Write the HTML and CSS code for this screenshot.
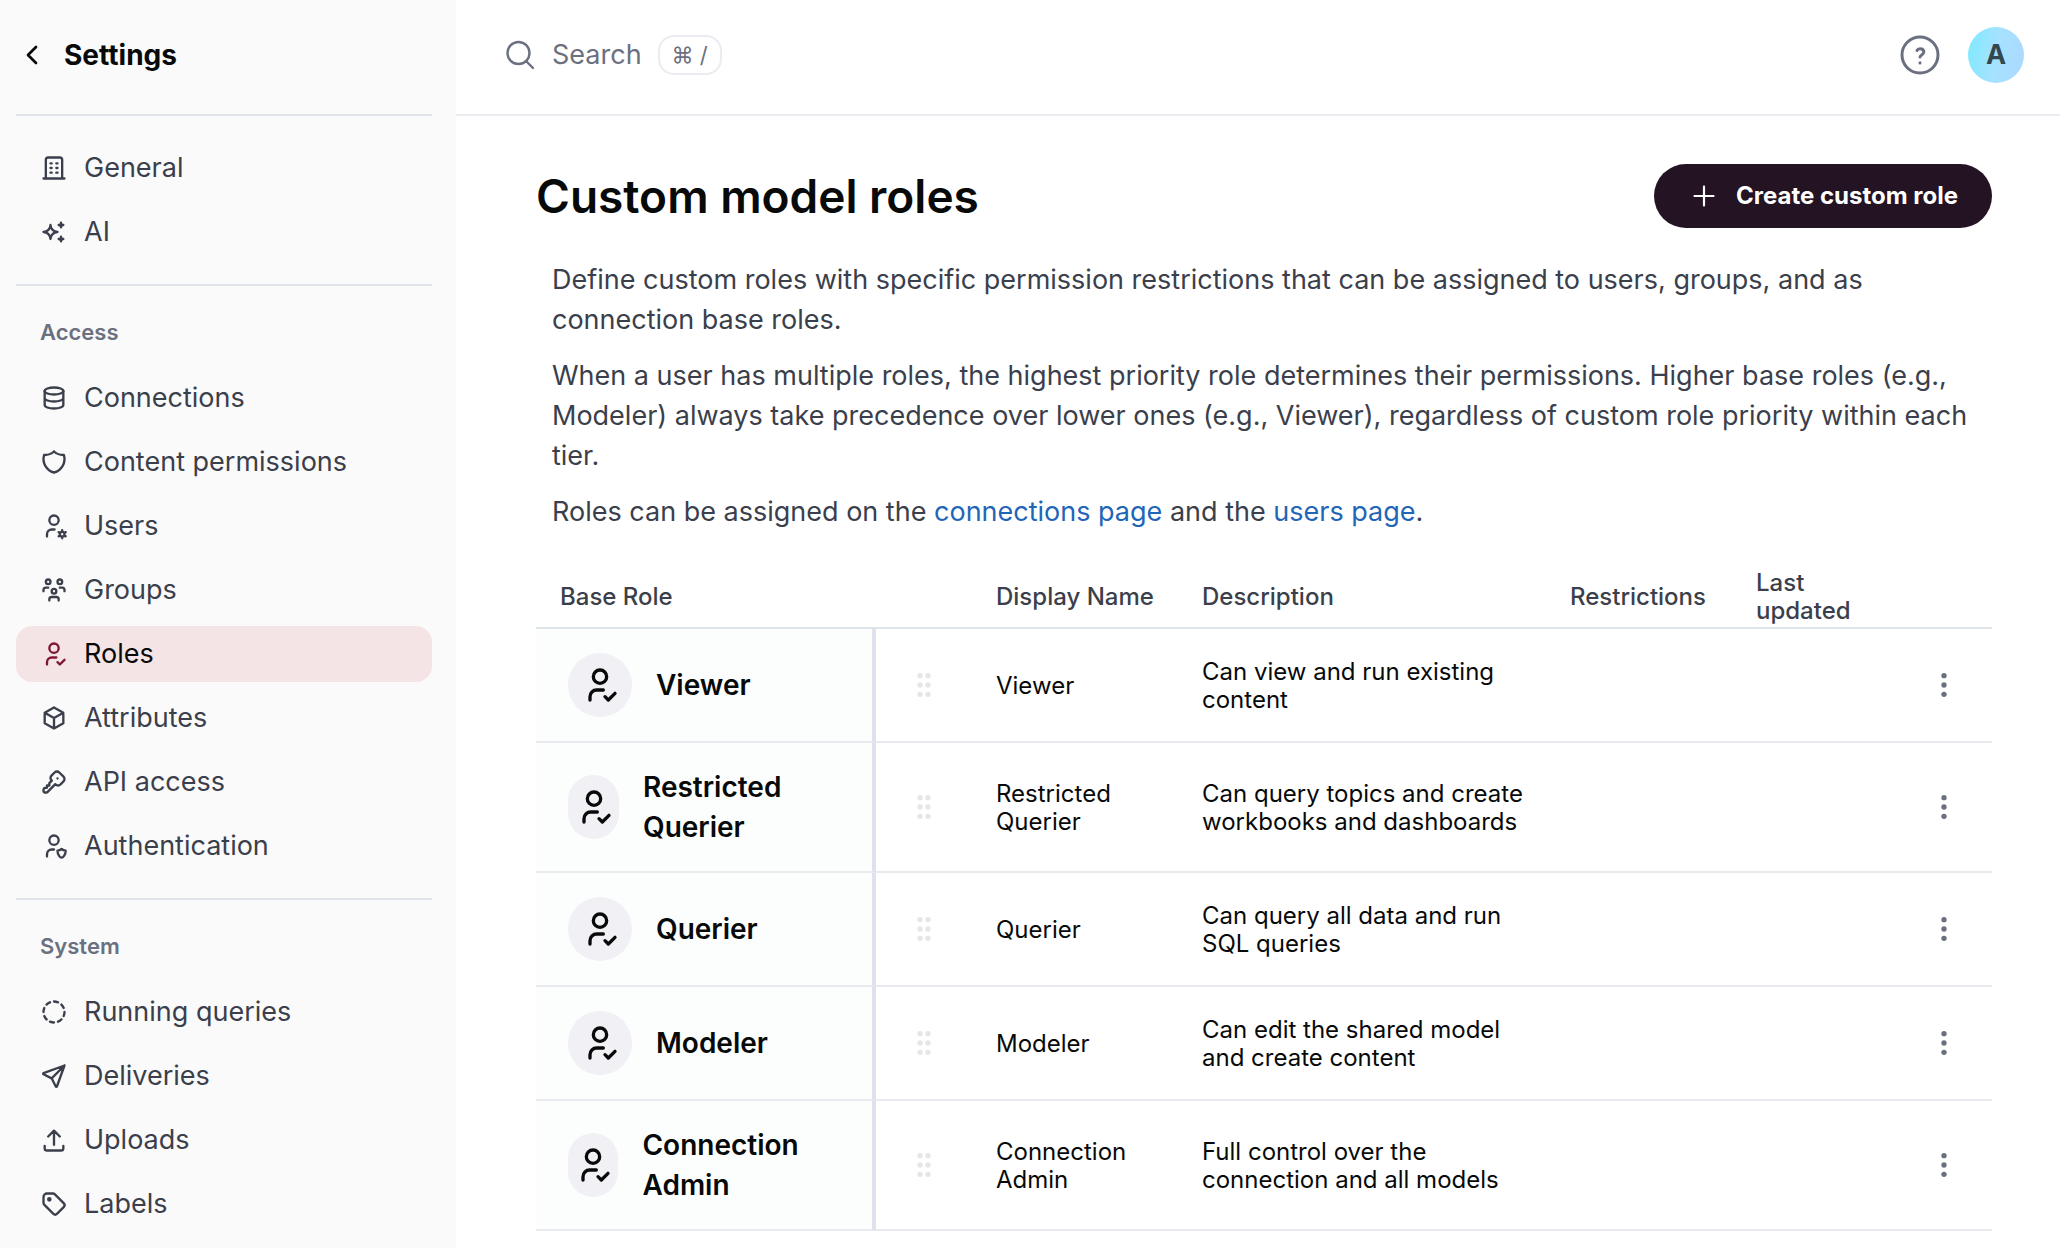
FILE: index.html
```html
<!DOCTYPE html>
<html lang="en">
<head>
<meta charset="utf-8">
<title>Custom model roles</title>
<link rel="stylesheet" href="styles.css">
</head>
<body>
<svg class="sprite" aria-hidden="true">
  <symbol id="user-check" viewBox="0 0 24 24"><path d="M8 7a4 4 0 1 0 8 0a4 4 0 0 0-8 0M6 21v-2a4 4 0 0 1 4-4h4M15 19l2 2l4-4"/></symbol>
  <symbol id="grip" viewBox="0 0 24 24"><g fill="currentColor" stroke="none"><circle cx="9" cy="5" r="2"/><circle cx="15" cy="5" r="2"/><circle cx="9" cy="12" r="2"/><circle cx="15" cy="12" r="2"/><circle cx="9" cy="19" r="2"/><circle cx="15" cy="19" r="2"/></g></symbol>
  <symbol id="dots" viewBox="0 0 24 24"><g fill="currentColor" stroke="none"><circle cx="12" cy="5" r="2"/><circle cx="12" cy="12" r="2"/><circle cx="12" cy="19" r="2"/></g></symbol>
</svg>
<div class="app">
  <aside class="sidebar">
    <a class="back" href="#">
      <svg class="icon icon-lg" viewBox="0 0 24 24"><path d="M15 6l-6 6l6 6"/></svg>
      <span>Settings</span>
    </a>
    <nav class="nav">
      <div class="nav-group">
        <a class="nav-item" href="#"><svg class="icon" viewBox="0 0 24 24"><path d="M3 21h18M5 21V5a2 2 0 0 1 2-2h10a2 2 0 0 1 2 2v16M9 8h1M9 12h1M9 16h1M14 8h1M14 12h1M14 16h1"/></svg>General</a>
        <a class="nav-item" href="#"><svg class="icon" viewBox="0 0 24 24"><path d="M16 18a2 2 0 0 1 2 2a2 2 0 0 1 2-2a2 2 0 0 1-2-2a2 2 0 0 1-2 2zm0-12a2 2 0 0 1 2 2a2 2 0 0 1 2-2a2 2 0 0 1-2-2a2 2 0 0 1-2 2zm-7 12a6 6 0 0 1 6-6a6 6 0 0 1-6-6a6 6 0 0 1-6 6a6 6 0 0 1 6 6z"/></svg>AI</a>
      </div>
      <div class="nav-group">
        <h2 class="nav-label">Access</h2>
        <a class="nav-item" href="#"><svg class="icon" viewBox="0 0 24 24"><ellipse cx="12" cy="6" rx="8" ry="3"/><path d="M4 6v6a8 3 0 0 0 16 0V6M4 12v6a8 3 0 0 0 16 0v-6"/></svg>Connections</a>
        <a class="nav-item" href="#"><svg class="icon" viewBox="0 0 24 24"><path d="M12 3a12 12 0 0 0 8.5 3a12 12 0 0 1-8.5 15a12 12 0 0 1-8.5-15a12 12 0 0 0 8.5-3"/></svg>Content permissions</a>
        <a class="nav-item" href="#"><svg class="icon" viewBox="0 0 24 24"><path d="M8 7a4 4 0 1 0 8 0a4 4 0 0 0-8 0M6 21v-2a4 4 0 0 1 4-4h2.500M17 19a2 2 0 1 0 4 0a2 2 0 1 0-4 0M19 15.500v1.500M19 21v1.500M22.032 17.250l-1.299.75M17.270 20l-1.300.75M15.970 17.250l1.300.75M20.733 20l1.300.75"/></svg>Users</a>
        <a class="nav-item" href="#"><svg class="icon" viewBox="0 0 24 24"><path d="M10 13a2 2 0 1 0 4 0a2 2 0 0 0-4 0M8 21v-1a2 2 0 0 1 2-2h4a2 2 0 0 1 2 2v1M15 5a2 2 0 1 0 4 0a2 2 0 0 0-4 0M17 10h2a2 2 0 0 1 2 2v1M5 5a2 2 0 1 0 4 0a2 2 0 0 0-4 0M3 13v-1a2 2 0 0 1 2-2h2"/></svg>Groups</a>
        <a class="nav-item active" href="#" aria-current="page"><svg class="icon"><use href="#user-check"/></svg>Roles</a>
        <a class="nav-item" href="#"><svg class="icon" viewBox="0 0 24 24"><path d="M12 3l8 4.500v9l-8 4.500l-8-4.500v-9l8-4.500M12 12l8-4.500M12 12v9M12 12l-8-4.500"/></svg>Attributes</a>
        <a class="nav-item" href="#"><svg class="icon" viewBox="0 0 24 24"><path d="M16.555 3.843l3.602 3.602a2.877 2.877 0 0 1 0 4.069l-2.643 2.643a2.877 2.877 0 0 1-4.069 0l-.301-.301l-6.558 6.558a2 2 0 0 1-1.239.578l-.175.008h-1.172a1 1 0 0 1-.993-.883l-.007-.117v-1.172a2 2 0 0 1 .467-1.284l.119-.13l.414-.414h2v-2h2v-2l2.144-2.144l-.301-.301a2.877 2.877 0 0 1 0-4.069l2.643-2.643a2.877 2.877 0 0 1 4.069 0zM15 9h.01"/></svg>API access</a>
        <a class="nav-item" href="#"><svg class="icon" viewBox="0 0 24 24"><path d="M6 21v-2a4 4 0 0 1 4-4h2M22 16c0 4-2.500 6-3.500 6s-3.500-2-3.500-6c1 0 2.500-.5 3.500-1.500c1 1 2.500 1.500 3.500 1.500zM8 7a4 4 0 1 0 8 0a4 4 0 0 0-8 0"/></svg>Authentication</a>
      </div>
      <div class="nav-group">
        <h2 class="nav-label">System</h2>
        <a class="nav-item" href="#"><svg class="icon" viewBox="0 0 24 24"><path d="M8.560 3.690a9 9 0 0 0-2.920 1.950M3.690 8.560a9 9 0 0 0-.69 3.440M3.690 15.440a9 9 0 0 0 1.950 2.920M8.560 20.310a9 9 0 0 0 3.440.69M15.440 20.310a9 9 0 0 0 2.920-1.950M20.310 15.440a9 9 0 0 0 .69-3.440M20.310 8.560a9 9 0 0 0-1.950-2.920M15.440 3.690a9 9 0 0 0-3.440-.69"/></svg>Running queries</a>
        <a class="nav-item" href="#"><svg class="icon" viewBox="0 0 24 24"><path d="M10 14l11-11M21 3l-6.500 18a.55.55 0 0 1-1 0l-3.500-7l-7-3.500a.55.55 0 0 1 0-1l18-6.500"/></svg>Deliveries</a>
        <a class="nav-item" href="#"><svg class="icon" viewBox="0 0 24 24"><path d="M4 17v2a2 2 0 0 0 2 2h12a2 2 0 0 0 2-2v-2M7 9l5-5l5 5M12 4v12"/></svg>Uploads</a>
        <a class="nav-item" href="#"><svg class="icon" viewBox="0 0 24 24"><circle cx="8" cy="8" r="1" fill="currentColor"/><path d="M3 6v5.172a2 2 0 0 0 .586 1.414l7.710 7.710a2.410 2.410 0 0 0 3.408 0l5.592-5.592a2.410 2.410 0 0 0 0-3.408l-7.710-7.710a2 2 0 0 0-1.414-.586h-5.172a3 3 0 0 0-3 3z"/></svg>Labels</a>
      </div>
    </nav>
  </aside>
  <div class="page">
    <header class="topbar">
      <button class="search" type="button">
        <svg class="icon icon-lg" viewBox="0 0 32 32"><g stroke-width="2.400"><circle cx="14.500" cy="14" r="11"/><path d="M22 22l7 7"/></g></svg>
        <span>Search</span>
        <kbd>⌘ /</kbd>
      </button>
      <div class="account">
        <button class="help" type="button" aria-label="Help">
          <svg class="icon icon-xl" viewBox="0 0 48 48"><g stroke-width="3"><circle cx="24" cy="24" r="18"/><path d="M21 19.500c.5-1 1.500-1.700 3-1.700c2.200 0 3.800 1.300 3.800 3.300c0 2.700-3.800 2.900-3.800 5M24 31.800v.1"/></g></svg>
        </button>
        <button class="avatar" type="button">A</button>
      </div>
    </header>
    <main class="content">
      <div class="title-row">
        <h1>Custom model roles</h1>
        <button class="create" type="button">
          <svg class="icon icon-lg" viewBox="0 0 32 32"><path d="M16 6.500v19M6.500 16h19" stroke-width="2.200"/></svg>
          Create custom role
        </button>
      </div>
      <div class="intro">
        <p>Define custom roles with specific permission restrictions that can be assigned to users, groups, and as connection base roles.</p>
        <p>When a user has multiple roles, the highest priority role determines their permissions. Higher base roles (e.g., Modeler) always take precedence over lower ones (e.g., Viewer), regardless of custom role priority within each tier.</p>
        <p>Roles can be assigned on the <a href="#">connections page</a> and the <a href="#">users page</a>.</p>
      </div>
      <table class="roles">
        <colgroup><col class="c-base"><col class="c-tool"><col class="c-name"><col><col class="c-limit"><col class="c-date"><col class="c-tool"></colgroup>
        <thead>
          <tr><th>Base Role</th><td></td><th>Display Name</th><th>Description</th><th>Restrictions</th><th>Last updated</th><td></td></tr>
        </thead>
        <tbody>
          <tr>
            <th scope="row"><div class="base"><span class="badge"><svg class="icon"><use href="#user-check"/></svg></span><span>Viewer</span></div></th>
            <td class="tool grip"><svg class="icon icon-lg"><use href="#grip"/></svg></td>
            <td>Viewer</td><td>Can view and run existing content</td><td></td><td></td>
            <td class="tool"><button class="more" type="button" aria-label="Viewer actions"><svg class="icon icon-lg"><use href="#dots"/></svg></button></td>
          </tr>
          <tr>
            <th scope="row"><div class="base"><span class="badge"><svg class="icon"><use href="#user-check"/></svg></span><span>Restricted Querier</span></div></th>
            <td class="tool grip"><svg class="icon icon-lg"><use href="#grip"/></svg></td>
            <td>Restricted Querier</td><td>Can query topics and create workbooks and dashboards</td><td></td><td></td>
            <td class="tool"><button class="more" type="button" aria-label="Restricted Querier actions"><svg class="icon icon-lg"><use href="#dots"/></svg></button></td>
          </tr>
          <tr>
            <th scope="row"><div class="base"><span class="badge"><svg class="icon"><use href="#user-check"/></svg></span><span>Querier</span></div></th>
            <td class="tool grip"><svg class="icon icon-lg"><use href="#grip"/></svg></td>
            <td>Querier</td><td>Can query all data and run SQL queries</td><td></td><td></td>
            <td class="tool"><button class="more" type="button" aria-label="Querier actions"><svg class="icon icon-lg"><use href="#dots"/></svg></button></td>
          </tr>
          <tr>
            <th scope="row"><div class="base"><span class="badge"><svg class="icon"><use href="#user-check"/></svg></span><span>Modeler</span></div></th>
            <td class="tool grip"><svg class="icon icon-lg"><use href="#grip"/></svg></td>
            <td>Modeler</td><td>Can edit the shared model and create content</td><td></td><td></td>
            <td class="tool"><button class="more" type="button" aria-label="Modeler actions"><svg class="icon icon-lg"><use href="#dots"/></svg></button></td>
          </tr>
          <tr>
            <th scope="row"><div class="base"><span class="badge"><svg class="icon"><use href="#user-check"/></svg></span><span>Connection Admin</span></div></th>
            <td class="tool grip"><svg class="icon icon-lg"><use href="#grip"/></svg></td>
            <td>Connection Admin</td><td>Full control over the connection and all models</td><td></td><td></td>
            <td class="tool"><button class="more" type="button" aria-label="Connection Admin actions"><svg class="icon icon-lg"><use href="#dots"/></svg></button></td>
          </tr>
        </tbody>
      </table>
    </main>
  </div>
</div>
</body>
</html>
```
FILE: styles.css
```css
* { box-sizing: border-box; }

body {
  margin: 0;
  background: #fff;
  color: #080a0a;
  font-family: Inter, "Liberation Sans", sans-serif;
  font-size: 27px;
  line-height: 40px;
}

h1, h2, p { margin: 0; }

a { color: #1f66b8; text-decoration: none; }

button {
  padding: 0;
  border: 0;
  background: none;
  color: inherit;
  font: inherit;
  cursor: pointer;
}

.sprite { display: none; }

.icon {
  display: block;
  flex: none;
  width: 28px;
  height: 28px;
  fill: none;
  stroke: currentColor;
  stroke-width: 2;
  stroke-linecap: round;
  stroke-linejoin: round;
}
.icon-lg { width: 32px; height: 32px; }
.icon-xl { width: 48px; height: 48px; }

.app { display: flex; min-height: 100vh; }

/* Sidebar */
.sidebar {
  flex: none;
  width: 456px;
  padding: 0 24px 16px 16px;
  background: #fafafa;
}
.back {
  display: flex;
  align-items: center;
  gap: 16px;
  height: 114px;
  padding-bottom: 4px;
  color: #080a0a;
  font-size: 28px;
  font-weight: 700;
}
.nav-group {
  display: flex;
  flex-direction: column;
  gap: 8px;
  padding: 24px 0;
  border-top: 2px solid #dfe3ea;
}
.nav-label {
  padding: 4px 24px 12px;
  color: #6b7080;
  font-size: 22px;
  font-weight: 600;
  line-height: 36px;
}
.nav-item {
  display: flex;
  align-items: center;
  gap: 16px;
  height: 56px;
  padding: 0 24px;
  border-radius: 16px;
  color: #3b3f4b;
}
.nav-item.active { background: #f5e4e5; color: #080a0a; }
.nav-item.active .icon { color: #7f1734; }

/* Top bar */
.page { flex: 1; min-width: 0; }
.topbar {
  display: flex;
  align-items: center;
  justify-content: space-between;
  height: 116px;
  padding: 0 36px 4px 48px;
  border-bottom: 2px solid #ebebf1;
  color: #6b7080;
}
.search { display: flex; align-items: center; gap: 16px; }
kbd {
  width: 64px;
  border: 2px solid #ebebf1;
  border-radius: 16px;
  font-family: inherit;
  font-size: 22px;
  line-height: 36px;
  text-align: center;
}
.account { display: flex; align-items: center; gap: 24px; }
.avatar {
  width: 56px;
  height: 56px;
  border-radius: 50%;
  background: linear-gradient(100deg, #7deaff, #a6e2ff 50%, #acd8ff);
  color: #33474f;
  font-weight: 700;
}

/* Page content */
.content { padding: 48px 68px 16px 80px; }
.title-row { display: flex; align-items: center; justify-content: space-between; }
h1 { font-size: 46px; font-weight: 600; line-height: 64px; }
.create {
  display: flex;
  align-items: center;
  gap: 16px;
  height: 64px;
  padding: 0 34px;
  border-radius: 32px;
  background: #241323;
  color: #fff;
  font-size: 24px;
  font-weight: 700;
}
.intro {
  display: flex;
  flex-direction: column;
  gap: 16px;
  padding: 32px 16px;
  color: #3b3f4b;
}

/* Roles table */
.roles {
  width: 100%;
  border-collapse: separate;
  border-spacing: 0;
  table-layout: fixed;
  font-size: 24px;
  line-height: 28px;
}
.c-base { width: 340px; }
.c-tool { width: 96px; }
.c-name { width: 206px; }
.c-limit { width: 186px; }
.c-date { width: 164px; }
.roles th, .roles td {
  padding: 2px 16px 0 24px;
  border-bottom: 2px solid #e9eaef;
  text-align: left;
  vertical-align: middle;
}
.roles thead th, .roles thead td {
  height: 65px;
  padding: 4px 0 2px 24px;
  border-color: #dfe3ea;
  color: #3b3f4b;
  font-weight: 500;
}
.roles thead th:nth-child(6) { padding-right: 24px; }
.roles tbody th {
  padding: 24px 32px;
  border-right: 4px solid #dfe2ec;
  background: #fcfefd;
  font-size: 28px;
  font-weight: 600;
  line-height: 40px;
}
.base { display: flex; align-items: center; gap: 24px; }
.badge {
  display: flex;
  align-items: center;
  justify-content: center;
  width: 64px;
  min-width: 0;
  height: 64px;
  border-radius: 32px;
  background: #f0f0f5;
}
.badge .icon { width: 40px; height: 40px; }
.roles td.tool { padding: 0 32px; }
.grip { color: #e6e6e9; }
.more { display: block; color: #6b7080; }
```
